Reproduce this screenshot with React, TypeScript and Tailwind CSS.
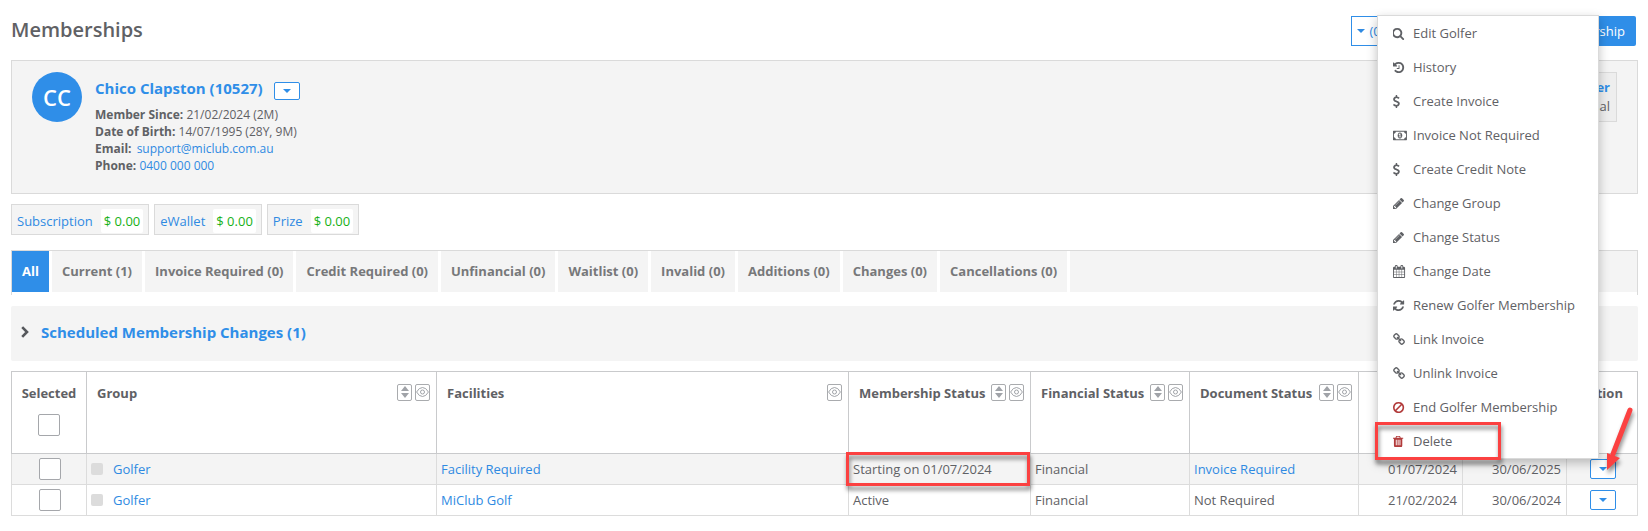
import { useState } from 'react';
import type { ReactNode } from 'react';

interface Membership {
  id: number;
  group: string;
  facility: string;
  status: string;
  financial: string;
  document: string;
  documentLink: boolean;
  start: string;
  end: string;
}

const memberships: Membership[] = [
  {
    id: 1,
    group: 'Golfer',
    facility: 'Facility Required',
    status: 'Starting on 01/07/2024',
    financial: 'Financial',
    document: 'Invoice Required',
    documentLink: true,
    start: '01/07/2024',
    end: '30/06/2025',
  },
  {
    id: 2,
    group: 'Golfer',
    facility: 'MiClub Golf',
    status: 'Active',
    financial: 'Financial',
    document: 'Not Required',
    documentLink: false,
    start: '21/02/2024',
    end: '30/06/2024',
  },
];

const balances = [
  { label: 'Subscription', amount: '$ 0.00' },
  { label: 'eWallet', amount: '$ 0.00' },
  { label: 'Prize', amount: '$ 0.00' },
];

const tabs = [
  'All',
  'Current (1)',
  'Invoice Required (0)',
  'Credit Required (0)',
  'Unfinancial (0)',
  'Waitlist (0)',
  'Invalid (0)',
  'Additions (0)',
  'Changes (0)',
  'Cancellations (0)',
];

// left: x of the glyph's first ink, so every icon starts on the same edge
const icons = {
  search: {
    left: 128,
    d: 'M1152 832q0-185-131.5-316.5t-316.5-131.5-316.5 131.5-131.5 316.5 131.5 316.5 316.5 131.5 316.5-131.5 131.5-316.5zm512 832q0 52-38 90t-90 38q-54 0-90-38l-343-342q-179 124-399 124-143 0-273.5-55.5t-225-150-150-225-55.5-273.5 55.5-273.5 150-225 225-150 273.5-55.5 273.5 55.5 225 150 150 225 55.5 273.5q0 220-124 399l343 343q37 37 37 90z',
  },
  history: {
    left: 128,
    d: 'M1664 896q0 156-61 298t-164 245-245 164-298 61q-172 0-327-72.5t-264-204.5q-7-10-6.5-22.5t8.5-20.5l137-138q10-9 25-9 16 2 23 12 73 95 179 147t225 52q104 0 198.5-40.5t163.5-109.5 109.5-163.5 40.5-198.5-40.5-198.5-109.5-163.5-163.5-109.5-198.5-40.5q-98 0-188 35.5t-160 101.5l137 138q31 30 14 69-17 40-59 40h-448q-26 0-45-19t-19-45v-448q0-42 40-59 39-17 69 14l130 129q107-101 244.5-156.5t284.5-55.5q156 0 298 61t245 164 164 245 61 298zm-640-288v448q0 14-9 23t-23 9h-320q-14 0-23-9t-9-23v-64q0-14 9-23t23-9h224v-352q0-14 9-23t23-9h64q14 0 23 9t9 23z',
  },
  dollar: {
    left: 430,
    d: 'M1362 1185q0 153-99.5 263.5t-258.5 136.5v175q0 14-9 23t-23 9h-135q-13 0-22.5-9.5t-9.5-22.5v-175q-66-9-127.5-31t-101.5-44.5-74-48-46.5-37.5-17.5-18q-17-21-2-41l103-135q7-10 23-12 15-2 24 9l2 2q113 99 243 125 37 8 74 8 81 0 142.5-43t61.5-122q0-28-15-53t-33.5-42-58.5-37.5-66-32-80-32.5q-39-16-61.5-25t-61.5-26.5-62.5-31-56.5-35.5-53.5-42.5-43.5-49-35.5-58-21-66.5-8.5-78q0-138 98-242t255-134v-180q0-13 9.5-22.5t22.5-9.5h135q14 0 23 9t9 23v176q57 6 110.5 23t87 33.5 63.5 37.5 39 29 15 14q17 18 5 38l-81 146q-8 15-23 16-14 3-27-7-3-3-14.5-12t-39-26.5-58.5-32-74.5-26-85.5-11.5q-95 0-155 43t-60 111q0 26 8.5 48t29.5 41.5 39.5 33 56 31 60.5 27 70 27.5q53 20 81 31.5t76 35 75.5 42.5 62 50 53 63.5 31.5 76.5 13 94z',
  },
  money: {
    left: 0,
    d: 'M768 1152h384v-96h-128v-448h-114l-148 137 77 80q42-37 55-57h2v288h-128v96zm512-256q0 70-21 142t-59.5 134-101.5 101-138 39-138-39-101.5-101-59.5-134-21-142 21-142 59.5-134 101.5-101 138-39 138 39 101.5 101 59.5 134 21 142zm512 256v-512q-106 0-181-75t-75-181h-1152q0 106-75 181t-181 75v512q106 0 181 75t75 181h1152q0-106 75-181t181-75zm128-832v1152q0 26-19 45t-45 19h-1792q-26 0-45-19t-19-45v-1152q0-26 19-45t45-19h1792q26 0 45 19t19 45z',
  },
  pencil: {
    left: 128,
    d: 'M491 1536l91-91-235-235-91 91v107h128v128h107zm523-928q0-22-22-22-10 0-17 7l-542 542q-7 7-7 17 0 22 22 22 10 0 17-7l542-542q7-7 7-17zm-54-192l416 416-832 832h-416v-416zm683 96q0 53-37 90l-166 166-416-416 166-165q36-38 90-38 53 0 91 38l235 234q37 39 37 91z',
  },
  calendar: {
    left: 64,
    d: 'M192 1664h288v-288h-288v288zm352 0h320v-288h-320v288zm-352-352h288v-320h-288v320zm352 0h320v-320h-320v320zm-352-384h288v-288h-288v288zm736 736h320v-288h-320v288zm-384-736h320v-288h-320v288zm768 736h288v-288h-288v288zm-384-352h320v-320h-320v320zm-352-864v-288q0-13-9.5-22.5t-22.5-9.5h-64q-13 0-22.5 9.5t-9.5 22.5v288q0 13 9.5 22.5t22.5 9.5h64q13 0 22.5-9.5t9.5-22.5zm736 864h288v-320h-288v320zm-384-384h320v-288h-320v288zm384 0h288v-288h-288v288zm32-480v-288q0-13-9.5-22.5t-22.5-9.5h-64q-13 0-22.5 9.5t-9.5 22.5v288q0 13 9.5 22.5t22.5 9.5h64q13 0 22.5-9.5t9.5-22.5zm384-64v1280q0 52-38 90t-90 38h-1408q-52 0-90-38t-38-90v-1280q0-52 38-90t90-38h128v-96q0-66 47-113t113-47h64q66 0 113 47t47 113v96h384v-96q0-66 47-113t113-47h64q66 0 113 47t47 113v96h128q52 0 90 38t38 90z',
  },
  refresh: {
    left: 128,
    d: 'M1639 1056q0 5-1 7-64 268-268 434.5t-478 166.5q-146 0-282.5-55t-243.5-157l-129 129q-19 19-45 19t-45-19-19-45v-448q0-26 19-45t45-19h448q26 0 45 19t19 45-19 45l-137 137q71 66 161 102t187 36q134 0 250-65t186-179q11-17 53-117 8-23 30-23h192q13 0 22.5 9.5t9.5 22.5zm25-800v448q0 26-19 45t-45 19h-448q-26 0-45-19t-19-45 19-45l138-138q-148-137-349-137-134 0-250 65t-186 179q-11 17-53 117-8 23-30 23h-199q-13 0-22.5-9.5t-9.5-22.5v-7q65-268 270-434.5t480-166.5q146 0 284 55.5t245 156.5l130-129q19-19 45-19t45 19 19 45z',
  },
  chain: {
    left: 64,
    d: 'M1520 1216q0-40-28-68l-208-208q-28-28-68-28-42 0-72 32 3 3 19 18.5t21.5 21.5 15 19 13 25.5 3.5 27.5q0 40-28 68t-68 28q-15 0-27.5-3.5t-25.5-13-19-15-21.5-21.5-18.5-19q-33 31-33 73 0 40 28 68l206 207q27 27 68 27 40 0 68-26l147-146q28-28 28-67zm-703-705q0-40-28-68l-206-207q-28-28-68-28-39 0-68 27l-147 146q-28 28-28 67 0 40 28 68l208 208q27 27 68 27 42 0 72-31-3-3-19-18.5t-21.5-21.5-15-19-13-25.5-3.5-27.5q0-40 28-68t68-28q15 0 27.5 3.5t25.5 13 19 15 21.5 21.5 18.5 19q33-31 33-73zm895 705q0 120-85 203l-147 146q-83 83-203 83-121 0-204-85l-206-207q-83-83-83-203 0-123 88-209l-88-88q-86 88-208 88-120 0-204-84l-208-208q-84-84-84-204t85-203l147-146q83-83 203-83 121 0 204 85l206 207q83 83 83 203 0 123-88 209l88 88q86-88 208-88 120 0 204 84l208 208q84 84 84 204z',
  },
  ban: {
    left: 128,
    d: 'M1440 893q0-161-87-295l-754 753q137 89 297 89 111 0 211.5-43.5t173.5-116.5 116-174.5 43-212.5zm-999 299l755-754q-135-91-300-91-148 0-273 73t-198 199-73 274q0 162 89 299zm1223-299q0 157-61 300t-163.5 246-245 164-298.5 61-298.5-61-245-164-163.5-246-61-300 61-299.5 163.5-245.5 245-164 298.5-61 298.5 61 245 164 163.5 245.5 61 299.5z',
  },
  trash: {
    left: 192,
    d: 'M704 1376v-704q0-14-9-23t-23-9h-64q-14 0-23 9t-9 23v704q0 14 9 23t23 9h64q14 0 23-9t9-23zm256 0v-704q0-14-9-23t-23-9h-64q-14 0-23 9t-9 23v704q0 14 9 23t23 9h64q14 0 23-9t9-23zm256 0v-704q0-14-9-23t-23-9h-64q-14 0-23 9t-9 23v704q0 14 9 23t23 9h64q14 0 23-9t9-23zm-544-992h448l-48-117q-7-9-17-11h-317q-10 2-17 11zm928 32v64q0 14-9 23t-23 9h-96v948q0 83-47 143.5t-113 60.5h-832q-66 0-113-58.5t-47-141.5v-952h-96q-14 0-23-9t-9-23v-64q0-14 9-23t23-9h309l70-167q15-37 54-63t79-26h320q40 0 79 26t54 63l70 167h309q14 0 23 9t9 23z',
  },
};

type IconName = keyof typeof icons;

const actions: { label: string; icon: IconName; danger?: boolean; marked?: boolean }[] = [
  { label: 'Edit Golfer', icon: 'search' },
  { label: 'History', icon: 'history' },
  { label: 'Create Invoice', icon: 'dollar' },
  { label: 'Invoice Not Required', icon: 'money' },
  { label: 'Create Credit Note', icon: 'dollar' },
  { label: 'Change Group', icon: 'pencil' },
  { label: 'Change Status', icon: 'pencil' },
  { label: 'Change Date', icon: 'calendar' },
  { label: 'Renew Golfer Membership', icon: 'refresh' },
  { label: 'Link Invoice', icon: 'chain' },
  { label: 'Unlink Invoice', icon: 'chain' },
  { label: 'End Golfer Membership', icon: 'ban', danger: true },
  { label: 'Delete', icon: 'trash', danger: true, marked: true },
];

function Icon({ name }: { name: IconName }) {
  const icon = icons[name];
  return (
    <svg className="h-[13px] w-[14px]" viewBox={`${icon.left} 0 1930 1792`} fill="currentColor" aria-hidden="true">
      <path d={icon.d} />
    </svg>
  );
}

function Caret() {
  return (
    <svg className="h-1 w-2" viewBox="0 0 8 4" fill="currentColor" aria-hidden="true">
      <path d="M0 0h8L4 4z" />
    </svg>
  );
}

function SortButton({ column }: { column: string }) {
  return (
    <button aria-label={`Sort by ${column}`} className="flex h-[17px] w-[15px] justify-center rounded-xs border border-[#a9abae] pt-px text-[#a0a3a8]">
      <svg className="h-3 w-2" viewBox="0 0 8 12" fill="currentColor" aria-hidden="true">
        <path d="M4 0l4 5H0zM4 12L0 7h8z" />
      </svg>
    </button>
  );
}

function HideButton({ column }: { column: string }) {
  return (
    <button aria-label={`Hide ${column}`} className="flex h-[17px] w-[15px] justify-center rounded-xs border border-[#a9abae] pt-px text-[#a0a3a8]">
      <svg className="h-3 w-[13px]" viewBox="0 0 13 12" fill="none" stroke="currentColor" aria-hidden="true">
        <path d="M.6 6Q3 1.500 6.500 1.500T12.400 6Q10 10.500 6.500 10.500T.6 6z" />
        <circle cx="6.500" cy="6" r="2" />
      </svg>
    </button>
  );
}

function HeaderCell({ title, sort, hide }: { title: string; sort?: boolean; hide?: boolean }) {
  return (
    <th className="border border-[#c9cacc] pt-3 pr-[6px] pl-[10px] text-left align-top font-bold whitespace-nowrap">
      <div className="flex justify-between">
        <span>{title}</span>
        <span className="flex gap-[3px]">
          {sort && <SortButton column={title} />}
          {hide && <HideButton column={title} />}
        </span>
      </div>
    </th>
  );
}

function PlainHeaderCell({ label, children }: { label?: string; children?: ReactNode }) {
  return (
    <th aria-label={label} className="border border-[#c9cacc] px-[5px] pt-3 text-center align-top font-bold">
      {children}
    </th>
  );
}

function MenuButton({ label, className }: { label: string; className: string }) {
  return (
    <button aria-label={label} className={`inline-flex w-[26px] items-center justify-center rounded-xs border border-[#2f8ee8] bg-white text-[#2f8ee8] ${className}`}>
      <Caret />
    </button>
  );
}

const checkboxClass = 'block size-[22px] mx-auto appearance-none rounded-xs border border-[#a5a7ab] bg-white checked:bg-[#2f8ee8]';
const cellClass = 'border border-[#dcdcdc] pl-1 pr-[5px] h-[31px]';
const centerCellClass = 'border border-[#dcdcdc] pl-[7px] pr-[5px] h-[31px] text-center';
const linkClass = 'text-[#2f8ae2]';

export default function App() {
  const [activeTab, setActiveTab] = useState('All');
  const [selected, setSelected] = useState<number[]>([]);

  const toggle = (id: number) => {
    setSelected((prev) => (prev.includes(id) ? prev.filter((x) => x !== id) : [...prev, id]));
  };

  const toggleAll = () => {
    setSelected(selected.length === memberships.length ? [] : memberships.map((m) => m.id));
  };

  return (
    <div className="relative bg-white pt-4 pr-[10px] pb-4 pl-[11px] font-['Open_Sans',sans-serif] text-[13px] leading-[18px] text-[#5f6165]">
      <header className="flex items-start justify-between pr-[2px]">
        <h1 className="text-[20px] leading-[28px] font-semibold">Memberships</h1>
        <div className="flex gap-[5px]">
          <button className={`flex h-[30px] w-[153px] items-center gap-1 border border-[#2f8ee8] bg-white px-[5px] ${linkClass}`}>
            <Caret />
            ({selected.length})
          </button>
          <button className="h-[30px] rounded-xs bg-[#2f8ee8] px-[11px] text-white">Add Membership</button>
        </div>
      </header>

      <section className="mt-[14px] flex h-[134px] items-start justify-between border border-[#dadada] bg-[#f4f4f4] py-[11px] pr-5 pl-5">
        <div className="flex gap-[13px]">
          <div className="flex size-[50px] items-center justify-center rounded-full bg-[#2f8ee8] text-[22px] font-semibold text-white">CC</div>
          <div className="pt-1">
            <div className="flex items-center gap-[11px]">
              <a href="#golfer" className="text-[15px] leading-5 font-bold text-[#2f8ee8]">Chico Clapston (10527)</a>
              <MenuButton label="Golfer actions" className="mt-[6px] h-[18px]" />
            </div>
            <div className="mt-[6px] text-[12px] leading-[17px]">
              <p><b>Member Since:</b> 21/02/2024 (2M)</p>
              <p><b>Date of Birth:</b> 14/07/1995 (28Y, 9M)</p>
              <p><b className="mr-[2px]">Email:</b> <a href="mailto:support@miclub.com.au" className={linkClass}>support@miclub.com.au</a></p>
              <p><b>Phone:</b> <a href="tel:0400000000" className={linkClass}>0400 000 000</a></p>
            </div>
          </div>
        </div>
        <div className="border border-[#dadada] bg-[#eeeeee] px-[6px] py-[5px] text-right leading-[19px]">
          <p className="font-bold text-[#2f8ee8]">Golfer</p>
          <p>Financial</p>
        </div>
      </section>

      <div className="mt-[10px] flex gap-[5px]">
        {balances.map((b) => (
          <a key={b.label} href="#balance" className={`flex items-center gap-2 border border-[#dadada] bg-[#f4f4f4] px-[5px] pt-1 pb-px ${linkClass}`}>
            {b.label}
            <span className="rounded-xs bg-white px-[3px] leading-6 text-[#17b117]">{b.amount}</span>
          </a>
        ))}
      </div>

      <nav className="mt-[15px] flex gap-[3px] border-x border-t border-[#dadada] pb-[3px]">
        {tabs.map((tab) => (
          <button
            key={tab}
            onClick={() => setActiveTab(tab)}
            className={`h-[41px] px-[10px] pb-[2px] font-bold whitespace-nowrap ${
              tab === activeTab ? 'bg-[#2f8ee8] text-white' : 'bg-[#f4f4f4] text-[#77787a]'
            }`}
          >
            {tab}
          </button>
        ))}
        <span className="grow bg-[#f4f4f4]" />
      </nav>

      <button className="mt-[11px] flex h-[55px] w-full items-center gap-3 rounded-xs bg-[#f4f4f4] px-[10px] pb-1 text-[15px] font-bold text-[#2f8ee8]">
        <svg className="h-3 w-2 text-[#55575b]" viewBox="0 0 8 12" fill="none" stroke="currentColor" strokeWidth="2.600" aria-hidden="true">
          <path d="M1.200 1.200L6 6l-4.800 4.800" />
        </svg>
        Scheduled Membership Changes (1)
      </button>

      <table className="mt-[10px] w-full table-fixed border-collapse">
        <colgroup>
          <col className="w-[75px]" />
          <col className="w-[350px]" />
          <col />
          <col className="w-[182px]" />
          <col className="w-[159px]" />
          <col className="w-[169px]" />
          <col className="w-[104px]" />
          <col className="w-[104px]" />
          <col className="w-[71px]" />
        </colgroup>
        <thead>
          <tr className="h-[82px]">
            <PlainHeaderCell>
              Selected
              <input type="checkbox" aria-label="Select all" className={`${checkboxClass} mt-3`} checked={selected.length === memberships.length} onChange={toggleAll} />
            </PlainHeaderCell>
            <HeaderCell title="Group" sort hide />
            <HeaderCell title="Facilities" hide />
            <HeaderCell title="Membership Status" sort hide />
            <HeaderCell title="Financial Status" sort hide />
            <HeaderCell title="Document Status" sort hide />
            <PlainHeaderCell label="Start date" />
            <PlainHeaderCell label="End date" />
            <PlainHeaderCell>Action</PlainHeaderCell>
          </tr>
        </thead>
        <tbody>
          {memberships.map((m, i) => (
            <tr key={m.id} className={i % 2 === 0 ? 'bg-[#f4f4f4]' : 'bg-white'}>
              <td className={centerCellClass}>
                <input type="checkbox" aria-label={`Select membership ${m.id}`} className={checkboxClass} checked={selected.includes(m.id)} onChange={() => toggle(m.id)} />
              </td>
              <td className={cellClass}>
                <span className="flex items-center gap-[10px]">
                  <span className="size-3 rounded-xs bg-[#dcdcdc]" />
                  <a href="#group" className={linkClass}>{m.group}</a>
                </span>
              </td>
              <td className={cellClass}><a href="#facility" className={linkClass}>{m.facility}</a></td>
              <td className={`${cellClass} relative`}>
                {m.status}
                {i === 0 && <span className="absolute -top-[2px] right-0 -bottom-[2px] -left-[3px] border-3 border-[#fb4141] drop-shadow-[1px_4px_2px_rgba(0,0,0,0.5)]" />}
              </td>
              <td className={cellClass}>{m.financial}</td>
              <td className={cellClass}>{m.documentLink ? <a href="#document" className={linkClass}>{m.document}</a> : m.document}</td>
              <td className={`${cellClass} text-right`}>{m.start}</td>
              <td className={`${cellClass} text-right`}>{m.end}</td>
              <td className={`${centerCellClass} relative`}>
                <MenuButton label="Membership actions" className="h-5 align-middle" />
                {i === 0 && (
                  <svg className="absolute right-0 bottom-2 z-20 h-20 w-10 drop-shadow-[1px_4px_2px_rgba(0,0,0,0.45)]" viewBox="0 0 40 80" aria-hidden="true">
                    <path d="M33 14L16 58" stroke="#fb4141" strokeWidth="5" strokeLinecap="round" />
                    <path d="M10 74L10 57l13 5z" fill="#fb4141" />
                  </svg>
                )}
              </td>
            </tr>
          ))}
        </tbody>
      </table>

      <ul className="absolute top-[15px] right-[49px] z-10 w-[222px] border border-[#dadada] bg-white shadow-[0_4px_10px_rgba(0,0,0,0.25)]">
        {actions.map((a) => (
          <li key={a.label} className="relative">
            <button className="flex h-[34px] w-full items-center gap-[6px] pl-[15px] text-left">
              <span className={a.danger ? 'text-[#b23b3b]' : 'text-[#5f6165]'}>
                <Icon name={a.icon} />
              </span>
              {a.label}
            </button>
            {a.marked && <span className="absolute -top-[2px] -left-[3px] h-[38px] w-[126px] border-3 border-[#fb4141] drop-shadow-[1px_4px_2px_rgba(0,0,0,0.5)]" />}
          </li>
        ))}
      </ul>
    </div>
  );
}
